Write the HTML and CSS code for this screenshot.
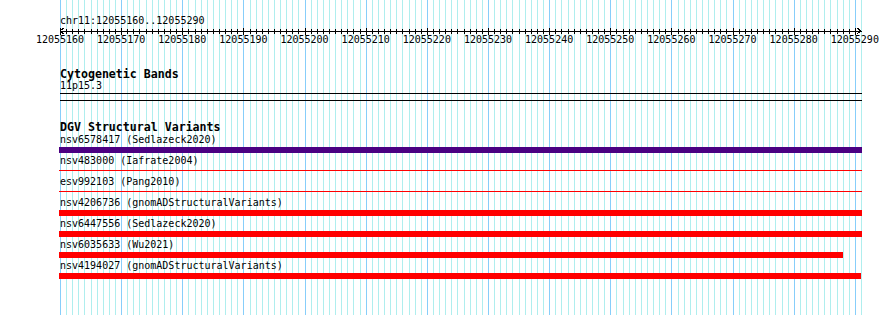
FILE: index.html
```html
<!DOCTYPE html>
<html lang="en">
<head>
<meta charset="utf-8">
<title>chr11:12055160..12055290</title>
<link rel="stylesheet" href="styles.css">
</head>
<body>
<div class="panel">
  <svg class="grid" id="grid" width="890" height="315" shape-rendering="crispEdges" aria-hidden="true"></svg>

  <div class="ruler">
    <div class="ruler-title">chr11:12055160..12055290</div>
    <svg class="axis" id="axis" width="890" height="8" shape-rendering="crispEdges" aria-hidden="true"></svg>
    <div class="ruler-labels">
      <span>12055160</span><span>12055170</span><span>12055180</span><span>12055190</span><span>12055200</span><span>12055210</span><span>12055220</span><span>12055230</span><span>12055240</span><span>12055250</span><span>12055260</span><span>12055270</span><span>12055280</span><span>12055290</span>
    </div>
  </div>

  <section class="track track-cyto">
    <h2 class="track-title">Cytogenetic Bands</h2>
    <div class="feature-label">11p15.3</div>
    <div class="band"></div>
  </section>

  <section class="track track-dgv">
    <h2 class="track-title">DGV Structural Variants</h2>
    <div class="feature">
      <div class="feature-label">nsv6578417 (Sedlazeck2020)</div>
      <div class="bar bar-indigo" style="width:803px"></div>
    </div>
    <div class="feature">
      <div class="feature-label">nsv483000 (Iafrate2004)</div>
      <div class="bar bar-thin" style="width:803px"></div>
    </div>
    <div class="feature">
      <div class="feature-label">esv992103 (Pang2010)</div>
      <div class="bar bar-thin" style="width:803px"></div>
    </div>
    <div class="feature">
      <div class="feature-label">nsv4206736 (gnomADStructuralVariants)</div>
      <div class="bar bar-red" style="width:803px"></div>
    </div>
    <div class="feature">
      <div class="feature-label">nsv6447556 (Sedlazeck2020)</div>
      <div class="bar bar-red" style="width:803px"></div>
    </div>
    <div class="feature">
      <div class="feature-label">nsv6035633 (Wu2021)</div>
      <div class="bar bar-red" style="width:784px"></div>
    </div>
    <div class="feature">
      <div class="feature-label">nsv4194027 (gnomADStructuralVariants)</div>
      <div class="bar bar-red" style="width:802px"></div>
    </div>
  </section>
</div>
<script src="script.js"></script>
</body>
</html>
```

FILE: styles.css
```css
html, body {
  margin: 0;
  padding: 0;
  background: #ffffff;
}

.panel {
  position: relative;
  width: 890px;
  height: 315px;
  overflow: hidden;
  background: #ffffff;
  color: #000000;
  font-family: "DejaVu Sans Mono", "Liberation Mono", monospace;
  font-size: 10px;
  line-height: 12px;
}

.grid {
  position: absolute;
  left: 0;
  top: 0;
  z-index: 0;
}

.ruler,
.track {
  position: relative;
  z-index: 1;
}

.ruler {
  padding-top: 15px;
}

.ruler-title {
  padding-left: 60px;
  height: 12px;
  white-space: nowrap;
}

.axis {
  display: block;
}

.ruler-labels {
  display: flex;
  padding-left: 29.43px;
  margin-top: -1px;
  height: 12px;
}

.ruler-labels span {
  flex: 0 0 61.145px;
  text-align: center;
  white-space: nowrap;
}

.track {
  padding-left: 60px;
}

.track-title {
  margin: 0;
  font-family: "DejaVu Sans Mono", "Liberation Mono", monospace;
  font-weight: bold;
  font-size: 11.6px;
  line-height: 12px;
  white-space: nowrap;
}

.track-cyto {
  margin-top: 22px;
}

.track-cyto .feature-label {
  margin-top: 0;
}

.feature-label {
  height: 12px;
  white-space: nowrap;
}

.band {
  margin-top: 1px;
  width: 802px;
  height: 6px;
  border-top: 1px solid #000000;
  border-bottom: 1px solid #000000;
}

.track-dgv {
  margin-top: 20px;
}

.track-dgv .track-title {
  line-height: 13px;
}

.feature {
  display: flex;
  flex-direction: column;
}

.bar {
  height: 6px;
  margin: 1px 0 2px -1px;
}

.bar-indigo {
  background: #4b0082;
}

.bar-red {
  background: #ff0000;
}

.bar-thin {
  background: linear-gradient(#ff0000, #ff0000) no-repeat 0 2px / 100% 1px;
}
```

FILE: script.js
```js
(function () {
  var NS = "http://www.w3.org/2000/svg";
  var X0 = 60, N = 131, W = 801;
  function xAt(i) { return X0 + Math.round(i * W / N); }
  function rect(svg, x, y, w, h, fill) {
    var r = document.createElementNS(NS, "rect");
    r.setAttribute("x", x);
    r.setAttribute("y", y);
    r.setAttribute("width", w);
    r.setAttribute("height", h);
    r.setAttribute("fill", fill);
    svg.appendChild(r);
  }

  var grid = document.getElementById("grid");
  for (var i = 0; i <= N; i++) {
    var major = (i % 10 === 0) && i < N;
    rect(grid, xAt(i), 0, 1, 315, major ? "#87cefa" : "#afeeee");
  }

  var axis = document.getElementById("axis");
  rect(axis, X0, 4, W + 1, 1, "#000000");
  for (var j = 0; j < N; j++) {
    var mj = j % 10 === 0;
    rect(axis, xAt(j), mj ? 1 : 2, 1, mj ? 7 : 5, "#000000");
  }
  var left = document.createElementNS(NS, "polyline");
  left.setAttribute("points", "64,1 60,4 64,7");
  left.setAttribute("fill", "none");
  left.setAttribute("stroke", "#000000");
  left.setAttribute("stroke-width", "1");
  axis.appendChild(left);
  var right = document.createElementNS(NS, "polyline");
  right.setAttribute("points", "857,1 861,4 857,7");
  right.setAttribute("fill", "none");
  right.setAttribute("stroke", "#000000");
  right.setAttribute("stroke-width", "1");
  axis.appendChild(right);
})();
```
